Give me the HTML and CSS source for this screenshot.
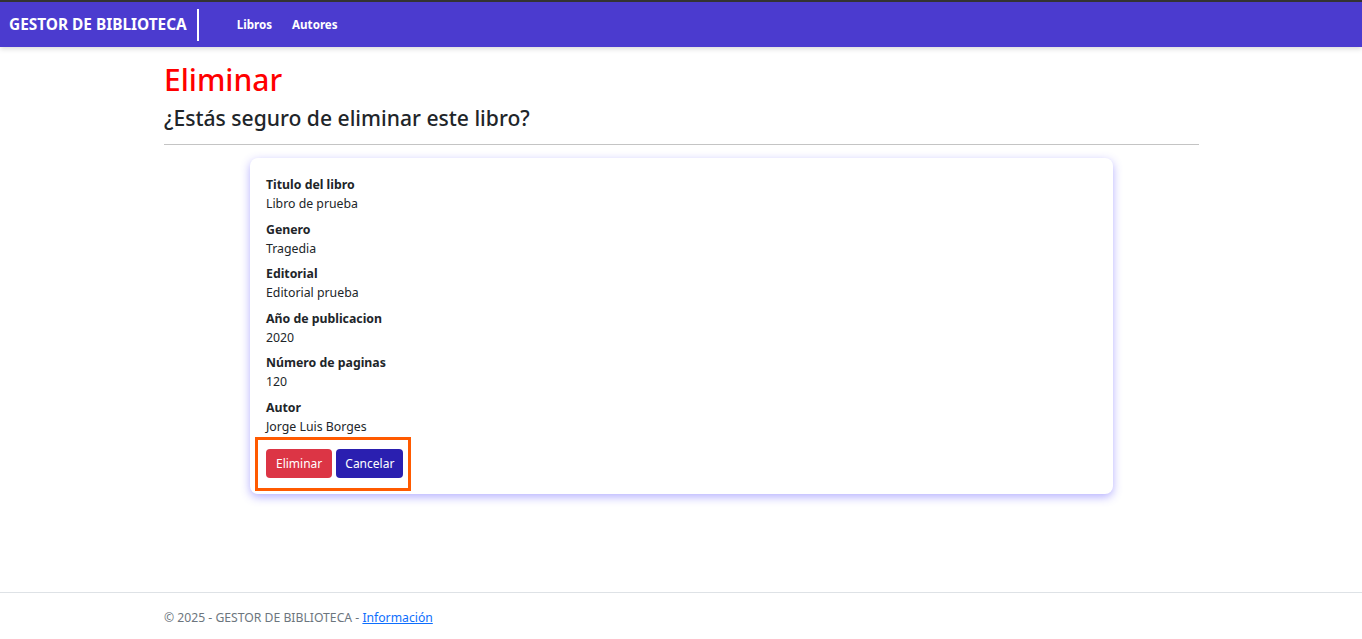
FILE: index.html
```html
<!DOCTYPE html>
<html lang="es">
<head>
<meta charset="utf-8">
<title>Eliminar - Gestor de Biblioteca</title>
<link rel="stylesheet" href="styles.css">
</head>
<body>
<header class="navbar">
  <a class="brand" href="#">GESTOR DE BIBLIOTECA</a>
  <nav class="nav-links">
    <a href="#">Libros</a>
    <a href="#">Autores</a>
  </nav>
</header>
<main class="container">
  <h1 class="title">Eliminar</h1>
  <h3 class="subtitle">¿Estás seguro de eliminar este libro?</h3>
  <hr class="divider">
  <div class="card">
    <dl class="details">
      <dt>Titulo del libro</dt>
      <dd>Libro de prueba</dd>
      <dt>Genero</dt>
      <dd>Tragedia</dd>
      <dt>Editorial</dt>
      <dd>Editorial prueba</dd>
      <dt>Año de publicacion</dt>
      <dd>2020</dd>
      <dt>Número de paginas</dt>
      <dd>120</dd>
      <dt>Autor</dt>
      <dd>Jorge Luis Borges</dd>
    </dl>
    <div class="actions">
      <button class="btn btn-danger" type="button">Eliminar</button>
      <button class="btn btn-primary" type="button">Cancelar</button>
    </div>
  </div>
</main>
<footer class="footer">
  <div class="footer-inner">© 2025 - GESTOR DE BIBLIOTECA - <a href="#">Información</a></div>
</footer>
</body>
</html>
```
FILE: styles.css
```css
* { box-sizing: border-box; }
html, body { height: 100%; }
body {
  margin: 0;
  font-family: "Noto Sans", "Open Sans", sans-serif;
  color: #212529;
  background: #fff;
  display: flex;
  flex-direction: column;
}
.navbar {
  height: 47px;
  border-top: 2px solid #333;
  background: #4b3bcf;
  display: flex;
  align-items: center;
  padding-left: 9px;
  box-shadow: 0 2px 5px rgba(0,0,0,0.15);
}
.brand {
  color: #fff;
  text-decoration: none;
  font-weight: 700;
  font-size: 15.4px;
  padding-right: 10px;
  border-right: 2px solid #fff;
  line-height: 32px;
}
.nav-links {
  display: flex;
  gap: 20px;
  padding-left: 38px;
}
.nav-links a {
  color: #fff;
  text-decoration: none;
  font-weight: 700;
  font-size: 11.6px;
}
.container {
  width: 1036px;
  margin: 0 auto;
  padding-left: 1px;
  flex: 1;
}
.title {
  margin: 14px 0 0;
  font-size: 30px;
  font-weight: 500;
  color: #ff0000;
  line-height: 38px;
}
.subtitle {
  margin: 4px 0 0;
  font-size: 21.1px;
  font-weight: 500;
  line-height: 30px;
}
.divider {
  margin: 11px 0 0;
  border: 0;
  border-top: 1px solid #c4c4c4;
}
.card {
  width: 863px;
  margin: 13px auto 0;
  background: #fff;
  border-radius: 8px;
  padding: 17px 16px 16px;
  box-shadow: 0 3px 10px rgba(90, 80, 255, 0.45);
}
.details {
  margin: 0;
  font-size: 12.3px;
}
.details dt {
  font-weight: 700;
  line-height: 19px;
}
.details dd {
  margin: 0 0 6.6px;
  line-height: 19px;
}
.actions {
  display: flex;
  gap: 4px;
  margin-top: 13px;
  width: max-content;
  position: relative;
}
.actions::after {
  content: "";
  position: absolute;
  left: -11px;
  top: -12px;
  right: -8px;
  bottom: -13px;
  border: 3px solid #ff5a00;
  pointer-events: none;
}
.btn {
  border: 0;
  border-radius: 4px;
  color: #fff;
  font-family: inherit;
  font-size: 12px;
  height: 29px;
  padding: 0 10px;
  cursor: pointer;
}
.btn-primary { background: #2a1fb0; padding: 0 9px; }
.btn-danger { background: #dc3545; }
.footer {
  border-top: 1px solid #dee2e6;
  height: 47px;
}
.footer-inner {
  width: 1036px;
  margin: 0 auto;
  padding-top: 16px;
  padding-left: 1px;
  font-size: 12.2px;
  color: #6c757d;
}
.footer-inner a { color: #0d6efd; }
```
